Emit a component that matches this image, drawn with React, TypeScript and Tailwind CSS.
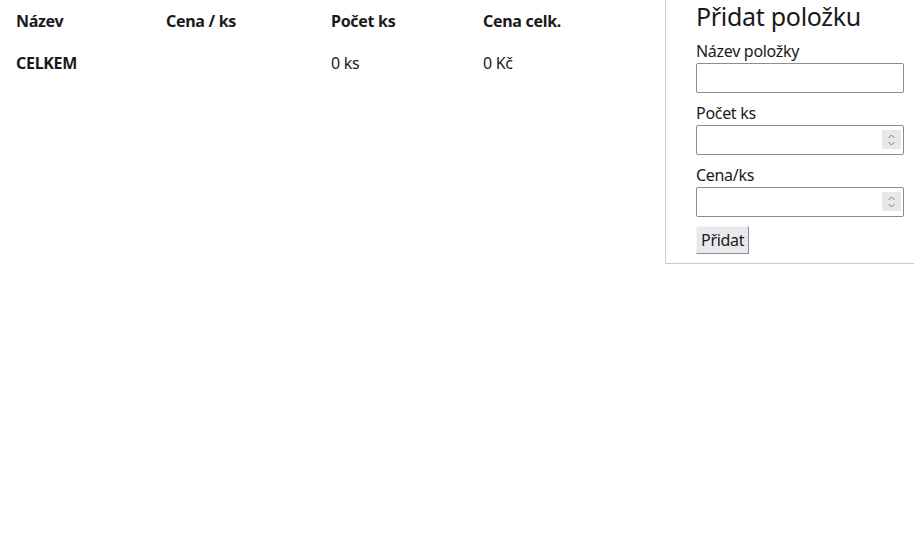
import { useState } from 'react'

const font = { fontFamily: '"Noto Sans", "Open Sans", sans-serif' }

function Spinner() {
  return (
    <div className="absolute right-[3px] top-[5px] flex h-[19px] w-[19px] flex-col items-center justify-center bg-[#e8e8e8]">
      <svg width="9" height="14" viewBox="0 0 9 14" fill="none" stroke="#7a7a7a" strokeWidth="1">
        <path d="M1.5 5 L4.5 2 L7.5 5" />
        <path d="M1.5 9 L4.5 12 L7.5 9" />
      </svg>
    </div>
  )
}

function Field({ label, value, onChange, spin }: { label: string; value: string; onChange: (v: string) => void; spin?: boolean }) {
  return (
    <div className="mb-[9px]">
      <label className="block text-[16px] leading-[23px] text-[#1a1a1a]">{label}</label>
      <div className="relative">
        <input
          className="block h-[30px] w-[208px] rounded-[2px] border border-[#8b8b93] bg-white px-1 text-[14px] outline-none"
          value={value}
          onChange={e => onChange(e.target.value)}
        />
        {spin && <Spinner />}
      </div>
    </div>
  )
}

export default function App() {
  const [name, setName] = useState('')
  const [count, setCount] = useState('')
  const [price, setPrice] = useState('')

  return (
    <div className="flex min-h-[549px] items-start bg-white tracking-[-0.3px] text-[#1a1a1a]" style={font}>
      <div className="flex-1 pl-[16px] pt-[9px] text-[16px]">
        <div className="grid grid-cols-[150px_165px_152px_1fr] font-bold leading-[24px]">
          <div>Název</div>
          <div>Cena / ks</div>
          <div>Počet ks</div>
          <div>Cena celk.</div>
        </div>
        <div className="mt-[18px] grid grid-cols-[150px_165px_152px_1fr] leading-[24px]">
          <div className="font-bold">CELKEM</div>
          <div></div>
          <div>0 ks</div>
          <div>0 Kč</div>
        </div>
      </div>

      <div className="w-[249px] border-b border-l border-[#cccccc] pb-[9px] pl-[30px] pr-[10px]">
        <h2 className="mb-[8px] text-[25px] leading-[32px]">Přidat položku</h2>
        <Field label="Název položky" value={name} onChange={setName} />
        <Field label="Počet ks" value={count} onChange={setCount} spin />
        <Field label="Cena/ks" value={price} onChange={setPrice} spin />
        <button className="h-[28px] border border-t-[#f4f4f4] border-l-[#f4f4f4] border-r-[#8a8a8a] border-b-[#8a8a8a] bg-[#e9e9ed] px-[4px] text-[16px] leading-[20px]">
          Přidat
        </button>
      </div>
    </div>
  )
}
